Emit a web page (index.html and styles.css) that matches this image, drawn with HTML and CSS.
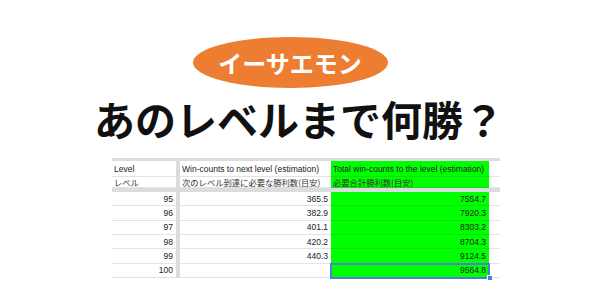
FILE: index.html
```html
<!DOCTYPE html>
<html lang="ja">
<head>
<meta charset="utf-8">
<link rel="stylesheet" href="styles.css">
</head>
<body>
<div class="hero">
  <div class="badge">イーサエモン</div>
  <h1 class="title">あのレベルまで何勝？</h1>
</div>
<div class="sheet">
  <div class="bar"></div><div class="divider"></div><div class="bar"></div><div class="bar"></div><div class="bar"></div>

  <div class="cell h1">Level</div><div class="divider"></div><div class="cell h1">Win-counts to next level (estimation)</div><div class="cell h1 green">Total win-counts to the level (estimation)</div><div class="cell h1 tail"></div>
  <div class="cell h2 jp">レベル</div><div class="divider"></div><div class="cell h2 jp">次のレベル到達に必要な勝利数(目安)</div><div class="cell h2 jp green">必要合計勝利数(目安)</div><div class="cell h2 tail"></div>

  <div class="bar thick"></div><div class="divider"></div><div class="bar thick"></div><div class="bar thick"></div><div class="bar thick"></div>

  <div class="cell num">95</div><div class="divider"></div><div class="cell num">365.5</div><div class="cell num green">7554.7</div><div class="cell tail"></div>
  <div class="cell num">96</div><div class="divider"></div><div class="cell num">382.9</div><div class="cell num green">7920.3</div><div class="cell tail"></div>
  <div class="cell num">97</div><div class="divider"></div><div class="cell num">401.1</div><div class="cell num green">8303.2</div><div class="cell tail"></div>
  <div class="cell num">98</div><div class="divider"></div><div class="cell num">420.2</div><div class="cell num green">8704.3</div><div class="cell tail"></div>
  <div class="cell num">99</div><div class="divider"></div><div class="cell num">440.3</div><div class="cell num green">9124.5</div><div class="cell tail"></div>
  <div class="cell num">100</div><div class="divider"></div><div class="cell num"></div><div class="cell num green selected">9564.8<span class="handle"></span></div><div class="cell tail"></div>
</div>
</body>
</html>
```
FILE: styles.css
```css
* { box-sizing: border-box; }
html, body { margin: 0; padding: 0; background: #ffffff; }
body { width: 592px; height: 296px; overflow: hidden; font-family: "Noto Sans CJK JP", "Noto Sans", sans-serif; }

.hero {
  display: flex;
  flex-direction: column;
  align-items: center;
  padding-top: 37px;
}
.badge {
  width: 195px;
  height: 51px;
  margin-left: -12px;
  border-radius: 50%;
  background: #ed7d31;
  color: #ffffff;
  font-weight: 700;
  font-size: 24px;
  line-height: 51px;
  text-align: center;
}
.title {
  margin: 4px 0 0 6px;
  font-size: 41px;
  line-height: 52px;
  font-weight: 700;
  color: #111111;
}

.sheet {
  display: grid;
  grid-template-columns: 64px 4px 151px 158px 11px;
  grid-template-rows: 3px 16px 11px 4px repeat(6, 14.33px);
  margin: 14px 0 0 112px;
  width: 388px;
  font-family: "Liberation Sans", Arial, sans-serif;
  font-size: 8.5px;
  color: #222222;
}
.bar { background: #dadce0; }
.divider { background: #dadce0; }
.cell {
  border-bottom: 1px solid #e2e3e3;
  white-space: nowrap;
  position: relative;
  padding: 0 3px 0 2px;
  display: flex;
  align-items: center;
}
.h1 { align-items: flex-end; padding-bottom: 2px; }
.jp {
  font-family: "Noto Sans CJK JP", sans-serif;
  font-size: 8.3px;
  color: #333333;
}
.num { justify-content: flex-end; }
.green { background: #00ff00; border-bottom-color: #10e010; }
.tail { background: transparent; }
.selected {
  outline: 2px solid #4a7fe0;
  outline-offset: -1px;
  z-index: 1;
}
.handle {
  position: absolute;
  right: -4px;
  bottom: -4px;
  width: 6px;
  height: 6px;
  background: #4a7fe0;
  border: 1px solid #ffffff;
}
```
